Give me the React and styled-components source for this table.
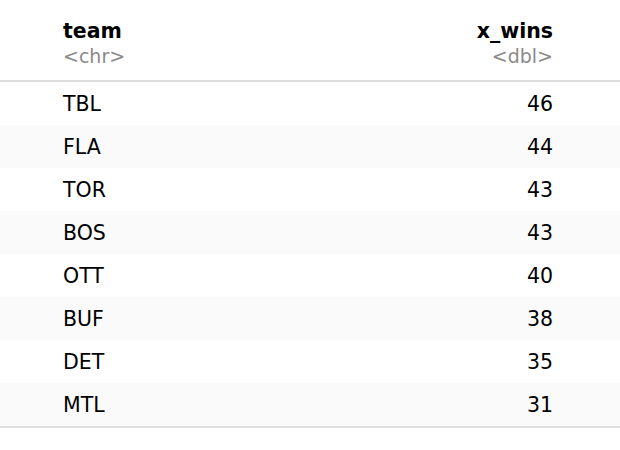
import React from 'react'
import styled, { createGlobalStyle } from 'styled-components'

const rows = [
  { team: 'TBL', wins: 46 },
  { team: 'FLA', wins: 44 },
  { team: 'TOR', wins: 43 },
  { team: 'BOS', wins: 43 },
  { team: 'OTT', wins: 40 },
  { team: 'BUF', wins: 38 },
  { team: 'DET', wins: 35 },
  { team: 'MTL', wins: 31 },
]

const App = () => {
  return (
    <>
      <GlobalStyle />
      <Table>
        <HeadRow>
          <HeadCell>
            <Name>team</Name>
            <Type>&lt;chr&gt;</Type>
          </HeadCell>
          <HeadCell $right>
            <Name>x_wins</Name>
            <Type>&lt;dbl&gt;</Type>
          </HeadCell>
        </HeadRow>
        {rows.map((row, index) => (
          <Row key={row.team} $striped={index % 2 === 1}>
            <Cell>{row.team}</Cell>
            <Cell $right>{row.wins}</Cell>
          </Row>
        ))}
      </Table>
    </>
  )
}

export default App

const GlobalStyle = createGlobalStyle`
  html, body {
    margin: 0;
    background: #fff;
  }
  body {
    font-family: "DejaVu Sans", "Liberation Sans", sans-serif;
    color: #111;
  }
`

const Table = styled.div`
  width: 620px;
  border-bottom: 2px solid #dedede;
`

const HeadRow = styled.div`
  display: grid;
  grid-template-columns: 1fr 1fr;
  padding: 19px 67px 11px 63px;
  border-bottom: 2px solid #dedede;
`

const HeadCell = styled.div`
  display: flex;
  flex-direction: column;
  align-items: ${(p) => (p.$right ? 'flex-end' : 'flex-start')};
`

const Name = styled.div`
  font-weight: bold;
  font-size: 20.5px;
  line-height: 25px;
  color: #000;
`

const Type = styled.div`
  font-size: 19px;
  line-height: 25px;
  color: #8a8a8a;
`

const Row = styled.div`
  display: grid;
  grid-template-columns: 1fr 1fr;
  align-items: center;
  height: 43px;
  padding: 0 67px 0 63px;
  background: ${(p) => (p.$striped ? '#fafafa' : '#fff')};
`

const Cell = styled.div`
  font-size: 20.5px;
  color: #000;
  text-align: ${(p) => (p.$right ? 'right' : 'left')};
`
